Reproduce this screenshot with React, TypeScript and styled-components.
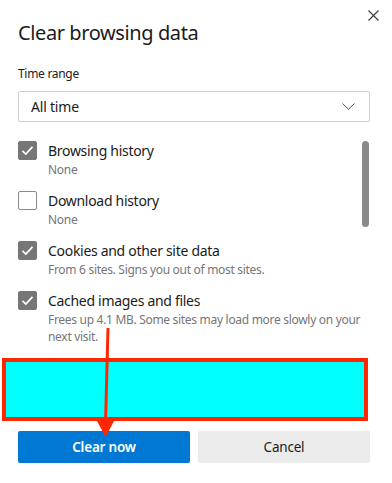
import React from 'react'
import styled, { createGlobalStyle } from 'styled-components'

const GlobalStyle = createGlobalStyle`
  html, body {
    margin: 0;
    padding: 0;
    background: #ffffff;
  }
  body {
    font-family: 'Segoe UI', 'Noto Sans', 'Open Sans', sans-serif;
    color: #1b1b1b;
  }
`

const Page = styled.div`
  position: relative;
  width: 392px;
  height: 483px;
  box-sizing: border-box;
  padding: 0 22px 0 18px;
  background: #ffffff;
  overflow: hidden;
`

const Header = styled.div`
  display: flex;
  justify-content: space-between;
  align-items: flex-start;
`

const Title = styled.h1`
  margin: 19px 0 0 0;
  font-size: 20px;
  line-height: 28px;
  font-weight: 400;
  letter-spacing: -0.4px;
  color: #1b1b1b;
`

const CloseButton = styled.div`
  width: 12px;
  height: 12px;
  margin: 9px -9px 0 0;
  display: flex;
  align-items: center;
  justify-content: center;
`

const FieldLabel = styled.div`
  margin-top: 18px;
  font-size: 12px;
  line-height: 18px;
  letter-spacing: -0.3px;
  color: #1b1b1b;
`

const Select = styled.div`
  margin-top: 8px;
  height: 31px;
  box-sizing: border-box;
  border: 1px solid #cfcfcf;
  border-radius: 2px;
  display: flex;
  align-items: center;
  justify-content: space-between;
  padding: 0 14px 0 12px;
  font-size: 14px;
  letter-spacing: -0.2px;
  color: #1b1b1b;
`

const ListArea = styled.div`
  margin-top: 19px;
  display: flex;
  height: 209px;
  margin-right: 1px;
`

const Items = styled.div`
  flex: 1;
  display: flex;
  flex-direction: column;
`

const Item = styled.div`
  display: flex;
  gap: 11px;
  min-height: 50px;
`

const Box = styled.div<{ $checked: boolean }>`
  flex: none;
  width: 19px;
  height: 19px;
  box-sizing: border-box;
  border-radius: 2px;
  background: ${(p) => (p.$checked ? '#767676' : '#ffffff')};
  border: 1px solid ${(p) => (p.$checked ? '#767676' : '#8a8a8a')};
  display: flex;
  align-items: center;
  justify-content: center;
`

const ItemText = styled.div`
  display: flex;
  flex-direction: column;
`

const ItemLabel = styled.div`
  font-size: 14px;
  line-height: 20px;
  letter-spacing: -0.3px;
  color: #1b1b1b;
`

const ItemSub = styled.div`
  font-size: 12px;
  line-height: 17px;
  letter-spacing: -0.3px;
  color: #767676;
`

const Track = styled.div`
  flex: none;
  width: 7px;
`

const Thumb = styled.div`
  width: 7px;
  height: 86px;
  border-radius: 4px;
  background: #8a8a8a;
`

const Cover = styled.div`
  margin: 8px 0 0 -16px;
  width: 366px;
  height: 63px;
  box-sizing: border-box;
  border: 4px solid #ff2600;
  background: #00ffff;
`

const Footer = styled.div`
  margin-top: 10px;
  display: grid;
  grid-template-columns: 1fr 1fr;
  gap: 8px;
`

const Button = styled.div<{ $primary?: boolean }>`
  height: 32px;
  border-radius: 2px;
  display: flex;
  align-items: center;
  justify-content: center;
  font-size: 13.5px;
  letter-spacing: -0.2px;
  font-weight: ${(p) => (p.$primary ? 600 : 400)};
  color: ${(p) => (p.$primary ? '#ffffff' : '#1b1b1b')};
  background: ${(p) => (p.$primary ? '#0078d4' : '#ebebeb')};
`

const Arrow = styled.svg`
  position: absolute;
  left: 94px;
  top: 326px;
  pointer-events: none;
`

const items = [
  { label: 'Browsing history', sub: 'None', checked: true },
  { label: 'Download history', sub: 'None', checked: false },
  {
    label: 'Cookies and other site data',
    sub: 'From 6 sites. Signs you out of most sites.',
    checked: true,
  },
  {
    label: 'Cached images and files',
    sub: 'Frees up 4.1 MB. Some sites may load more slowly on your next visit.',
    checked: true,
  },
]

const Check = () => (
  <svg width="13" height="11" viewBox="0 0 13 11">
    <path d="M1.5 5.8 L4.8 9 L11.5 1.8" fill="none" stroke="#ffffff" strokeWidth="1.7" />
  </svg>
)

const App: React.FC = () => {
  return (
    <Page>
      <GlobalStyle />
      <Header>
        <Title>Clear browsing data</Title>
        <CloseButton>
          <svg width="11" height="11" viewBox="0 0 11 11">
            <path d="M0.5 0.5 L10.5 10.5 M10.5 0.5 L0.5 10.5" stroke="#3a3a3a" strokeWidth="1.1" />
          </svg>
        </CloseButton>
      </Header>
      <FieldLabel>Time range</FieldLabel>
      <Select>
        <span>All time</span>
        <svg width="13" height="7" viewBox="0 0 13 7">
          <path d="M0.5 0.5 L6.5 6.3 L12.5 0.5" fill="none" stroke="#555555" strokeWidth="1" />
        </svg>
      </Select>
      <ListArea>
        <Items>
          {items.map((it) => (
            <Item key={it.label}>
              <Box $checked={it.checked}>{it.checked && <Check />}</Box>
              <ItemText>
                <ItemLabel>{it.label}</ItemLabel>
                <ItemSub>{it.sub}</ItemSub>
              </ItemText>
            </Item>
          ))}
        </Items>
        <Track>
          <Thumb />
        </Track>
      </ListArea>
      <Cover />
      <Footer>
        <Button $primary>Clear now</Button>
        <Button>Cancel</Button>
      </Footer>
      <Arrow width="22" height="114" viewBox="0 0 22 114">
        <path d="M14 2 L11.5 98" stroke="#ff2600" strokeWidth="3" fill="none" />
        <path d="M3 95 L20 95 L11.5 111 Z" fill="#ff2600" />
      </Arrow>
    </Page>
  )
}

export default App
